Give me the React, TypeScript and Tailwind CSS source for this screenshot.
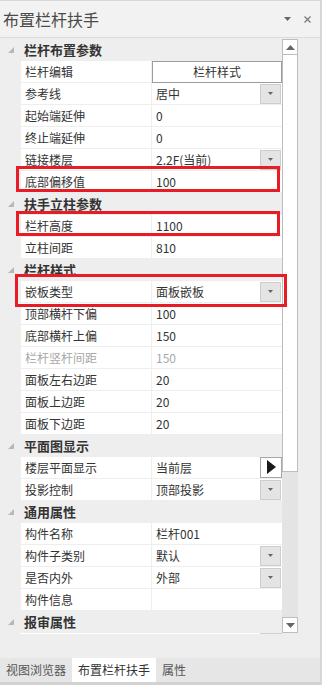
import React from 'react'

type Row =
  | { cat: string }
  | { label: string; value: string; control?: 'button' | 'drop' | 'arrow'; disabled?: boolean }

const rows: Row[] = [
  { cat: '栏杆布置参数' },
  { label: '栏杆编辑', value: '栏杆样式', control: 'button' },
  { label: '参考线', value: '居中', control: 'drop' },
  { label: '起始端延伸', value: '0' },
  { label: '终止端延伸', value: '0' },
  { label: '链接楼层', value: '2.2F(当前)', control: 'drop' },
  { label: '底部偏移值', value: '100' },
  { cat: '扶手立柱参数' },
  { label: '栏杆高度', value: '1100' },
  { label: '立柱间距', value: '810' },
  { cat: '栏杆样式' },
  { label: '嵌板类型', value: '面板嵌板', control: 'drop' },
  { label: '顶部横杆下偏', value: '100' },
  { label: '底部横杆上偏', value: '150' },
  { label: '栏杆竖杆间距', value: '150', disabled: true },
  { label: '面板左右边距', value: '20' },
  { label: '面板上边距', value: '20' },
  { label: '面板下边距', value: '20' },
  { cat: '平面图显示' },
  { label: '楼层平面显示', value: '当前层', control: 'arrow' },
  { label: '投影控制', value: '顶部投影', control: 'drop' },
  { cat: '通用属性' },
  { label: '构件名称', value: '栏杆001' },
  { label: '构件子类别', value: '默认', control: 'drop' },
  { label: '是否内外', value: '外部', control: 'drop' },
  { label: '构件信息', value: '' },
  { cat: '报审属性' },
]

const DropBtn = () => (
  <div className="w-[21px] h-[20px] mr-px bg-[#e4e4e4] border border-[#cdcdcd] flex items-center justify-center">
    <svg width="5" height="3" viewBox="0 0 5 3">
      <polygon points="0,0 5,0 2.5,3" fill="#666" />
    </svg>
  </div>
)

const ArrowBtn = () => (
  <div className="w-[22px] h-[21px] -mt-px bg-white border border-[#a8a8a8] flex items-center justify-center">
    <svg width="9" height="14" viewBox="0 0 9 14">
      <polygon points="0,0 9,7 0,14" fill="#1a1a1a" />
    </svg>
  </div>
)

const App: React.FC = () => {
  return (
    <div className="w-[322px] h-[685px] bg-[#eeeeee] flex flex-col relative overflow-hidden border-r-2 border-t border-[#d6d6d6] font-['Noto_Sans_CJK_SC','Liberation_Sans',sans-serif]">
      {/* title */}
      <div className="h-[37px] shrink-0 bg-[#f2f2f2] border-b border-[#dcdcdc] flex items-center pl-[3px] pr-[6px]">
        <span className="text-[16px] text-[#4a4a4a] leading-none">布置栏杆扶手</span>
        <div className="flex-1" />
        <svg width="7" height="4" viewBox="0 0 7 4" className="mr-[13px]">
          <polygon points="0,0 7,0 3.5,4" fill="#666" />
        </svg>
        <svg width="7" height="7" viewBox="0 0 7 7" className="mr-[3px]">
          <path d="M0.5 0.5 L6.5 6.5 M6.5 0.5 L0.5 6.5" stroke="#777" strokeWidth="1.2" />
        </svg>
      </div>

      {/* body */}
      <div className="h-[620px] shrink-0 flex pt-px">
        <div className="w-[282px] flex flex-col">
          {rows.map((r, i) =>
            'cat' in r ? (
              <div key={i} className="h-[22px] flex items-center">
                <div className="w-[20px] flex justify-end pr-[6px]">
                  <svg width="6" height="6" viewBox="0 0 6 6">
                    <polygon points="6,0 6,6 0,6" fill="#b8b8b8" />
                  </svg>
                </div>
                <span className="pl-1 text-[13px] font-bold text-[#333]">{r.cat}</span>
              </div>
            ) : (
              <div key={i} className="h-[22px] flex gap-px">
                <div className="w-[20px]" />
                <div
                  className={`w-[130px] h-[21px] bg-white flex items-center pl-1 text-[12px] ${
                    r.disabled ? 'text-[#a8a8a8]' : 'text-[#333]'
                  }`}
                >
                  {r.label}
                </div>
                {r.control === 'button' ? (
                  <div className="w-[130px] h-[22px] bg-white border border-[#9c9c9c] flex items-center justify-center text-[12px] text-[#333]">
                    {r.value}
                  </div>
                ) : (
                  <div
                    className={`w-[130px] h-[21px] bg-white flex items-center justify-between pl-1 text-[12px] ${
                      r.disabled ? 'text-[#a8a8a8]' : 'text-[#333]'
                    }`}
                  >
                    <span>{r.value}</span>
                    {r.control === 'drop' && <DropBtn />}
                    {r.control === 'arrow' && <ArrowBtn />}
                  </div>
                )}
              </div>
            )
          )}
          <div className="flex h-px">
            <div className="w-[20px]" />
            <div className="w-[240px] bg-white" />
            <div className="w-[22px] bg-[#d0d0d0]" />
          </div>
        </div>

        {/* scrollbar */}
        <div className="w-[16px] flex flex-col self-start">
          <div className="h-[16px] bg-white border border-[#bdbdbd] flex items-center justify-center">
            <svg width="9" height="5" viewBox="0 0 9 5">
              <polygon points="0,5 9,5 4.5,0" fill="#666" />
            </svg>
          </div>
          <div className="h-[417px] bg-white border border-t-0 border-[#bdbdbd]" />
          <div className="h-[145px] bg-[#e4e4e4]" />
          <div className="h-[16px] bg-white border border-[#bdbdbd] flex items-center justify-center">
            <svg width="9" height="5" viewBox="0 0 9 5">
              <polygon points="0,0 9,0 4.5,5" fill="#666" />
            </svg>
          </div>
        </div>
        <div className="flex-1" />
      </div>

      {/* tabs */}
      <div className="h-[27px] shrink-0 bg-[#e6e6e6] border-b-[3px] border-[#d2d2d2] flex items-stretch text-[12px]">
        <div className="px-[6px] flex items-center text-[#555]">视图浏览器</div>
        <div className="px-[6px] flex items-center bg-white text-[#333]">布置栏杆扶手</div>
        <div className="px-[6px] flex items-center text-[#555]">属性</div>
      </div>

      {/* highlight boxes */}
      <div className="absolute left-[16px] top-[165px] w-[264px] h-[26px] border-[3px] border-[#e81c24]" />
      <div className="absolute left-[16px] top-[210px] w-[264px] h-[25px] border-[3px] border-[#e81c24]" />
      <div className="absolute left-[15px] top-[273px] w-[272px] h-[33px] border-[3px] border-[#e81c24]" />
    </div>
  )
}

export default App
